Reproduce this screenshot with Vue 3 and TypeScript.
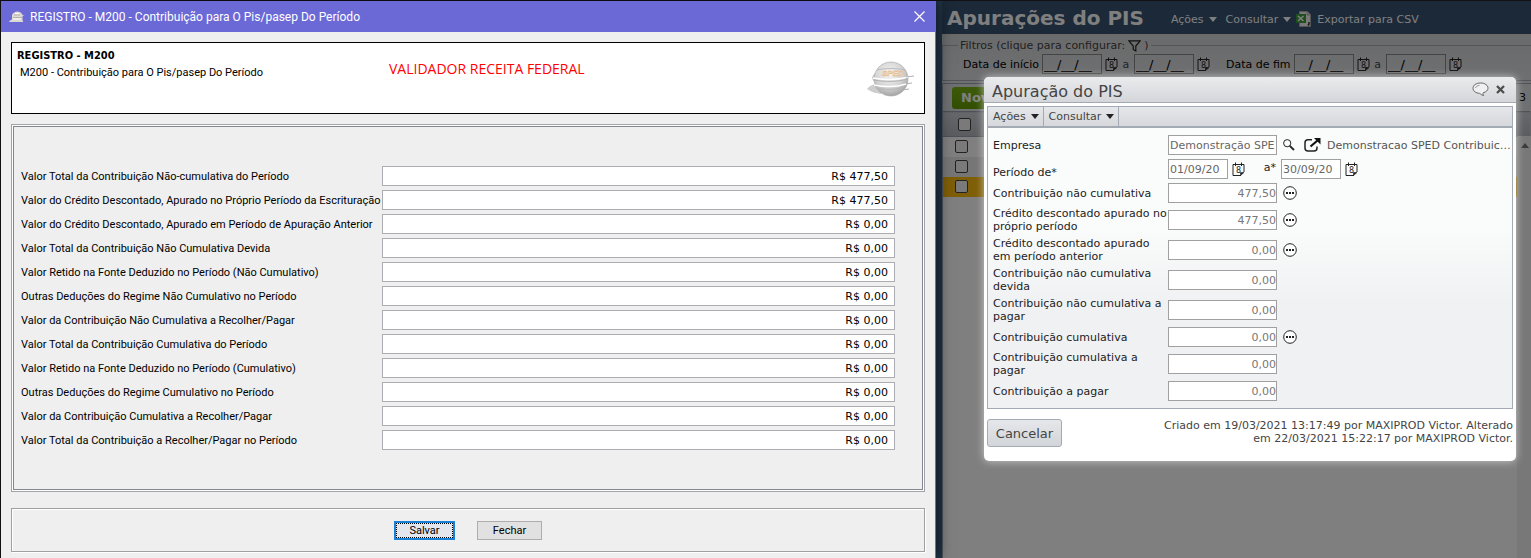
<script setup lang="ts">
import { h, ref } from 'vue'

interface Field {
  id: string
  label: string
  value: string
}
interface DialogField extends Field {
  details: boolean
}

const CalendarIcon = () =>
  h('svg', { width: 13, height: 14, viewBox: '0 0 13 14', 'aria-hidden': 'true' }, [
    h('path', { d: 'M12 10V2.5H1v11h8', fill: 'none', stroke: '#222' }),
    h('path', { d: 'M8.5 13.500V10.500H12z', fill: '#222', stroke: '#222', 'stroke-width': 0.6 }),
    h('path', { d: 'M3.500 .5v3.500M9.500 .5v3.500', stroke: '#222' }),
    h(
      'text',
      { x: 6.5, y: 11, 'text-anchor': 'middle', 'font-size': 8, 'font-family': 'DejaVu Sans, sans-serif', fill: '#222' },
      '8',
    ),
  ])

const validatorFields = ref<Field[]>([
  { id: 'v1', label: 'Valor Total da Contribuição Não-cumulativa do Período', value: 'R$ 477,50' },
  { id: 'v2', label: 'Valor do Crédito Descontado, Apurado no Próprio Período da Escrituração', value: 'R$ 477,50' },
  { id: 'v3', label: 'Valor do Crédito Descontado, Apurado em Período de Apuração Anterior', value: 'R$ 0,00' },
  { id: 'v4', label: 'Valor Total da Contribuição Não Cumulativa Devida', value: 'R$ 0,00' },
  { id: 'v5', label: 'Valor Retido na Fonte Deduzido no Período (Não Cumulativo)', value: 'R$ 0,00' },
  { id: 'v6', label: 'Outras Deduções do Regime Não Cumulativo no Período', value: 'R$ 0,00' },
  { id: 'v7', label: 'Valor da Contribuição Não Cumulativa a Recolher/Pagar', value: 'R$ 0,00' },
  { id: 'v8', label: 'Valor Total da Contribuição Cumulativa do Período', value: 'R$ 0,00' },
  { id: 'v9', label: 'Valor Retido na Fonte Deduzido no Período (Cumulativo)', value: 'R$ 0,00' },
  { id: 'v10', label: 'Outras Deduções do Regime Cumulativo no Período', value: 'R$ 0,00' },
  { id: 'v11', label: 'Valor da Contribuição Cumulativa a Recolher/Pagar', value: 'R$ 0,00' },
  { id: 'v12', label: 'Valor Total da Contribuição a Recolher/Pagar no Período', value: 'R$ 0,00' },
])

const dialogFields = ref<DialogField[]>([
  { id: 'd1', label: 'Contribuição não cumulativa', value: '477,50', details: true },
  { id: 'd2', label: 'Crédito descontado apurado no próprio período', value: '477,50', details: true },
  { id: 'd3', label: 'Crédito descontado apurado em período anterior', value: '0,00', details: true },
  { id: 'd4', label: 'Contribuição não cumulativa devida', value: '0,00', details: false },
  { id: 'd5', label: 'Contribuição não cumulativa a pagar', value: '0,00', details: false },
  { id: 'd6', label: 'Contribuição cumulativa', value: '0,00', details: true },
  { id: 'd7', label: 'Contribuição cumulativa a pagar', value: '0,00', details: false },
  { id: 'd8', label: 'Contribuição a pagar', value: '0,00', details: false },
])

const company = ref('Demonstração SPED Contribuições')
const periodStart = ref('01/09/20')
const periodEnd = ref('30/09/20')

const filters = ref([
  { id: 'f1', label: 'Data de início', from: '__/__/__', to: '__/__/__' },
  { id: 'f2', label: 'Data de fim', from: '__/__/__', to: '__/__/__' },
])

const rows = [
  { id: 1, selected: false },
  { id: 2, selected: false },
  { id: 3, selected: true },
]
</script>

<template>
  <div class="desktop">
    <section class="validator">
      <header class="titlebar">
        <svg class="app-icon" viewBox="0 0 16 12" aria-hidden="true">
          <path d="M0 11c1-2 2-2 3-2.500V4c2-4 8-5 10.500 0l2 .3-2 .7V9l.8 2z" fill="#dcd9d2" />
          <path d="M5 4h6M4 6.500h9" stroke="#b9b2aa" />
          <path d="M6 2.500h4M4 8h8" stroke="#fff" />
        </svg>
        <h1>REGISTRO - M200 - Contribuição para O Pis/pasep Do Período</h1>
        <button class="win-close" type="button" aria-label="Fechar janela">
          <svg viewBox="0 0 11 11"><path d="M.5.5l10 10M10.500.5l-10 10" stroke="#fff" stroke-width="1.200" /></svg>
        </button>
      </header>
      <main class="validator-body">
        <div class="banner">
          <div class="banner-text">
            <strong>REGISTRO - M200</strong>
            <span>M200 - Contribuição para O Pis/pasep Do Período</span>
          </div>
          <p class="stamp">VALIDADOR RECEITA FEDERAL</p>
          <svg class="logo" viewBox="0 0 48 38" aria-hidden="true">
            <radialGradient id="ball" cx="45%" cy="35%" r="65%">
              <stop offset="0" stop-color="#f4f4f4" />
              <stop offset=".6" stop-color="#d6d6d6" />
              <stop offset="1" stop-color="#a4a4a4" />
            </radialGradient>
            <path d="M0 29c4-5 7-4 10-6-3-1-5-3-5-6 2-4 5-5 11-5l-2 22c-4-1-9-1-14-5z" fill="#cdcdcd" />
            <circle cx="24" cy="19" r="17" fill="url(#ball)" stroke="#a5a5a5" stroke-width=".6" />
            <path d="M10 10c8-2 20-2 28 0" fill="none" stroke="#bbb" />
            <path d="M6 18c10 2 25 2 35-1" fill="none" stroke="#fff" stroke-width="1.500" />
            <path d="M7 20c10 2 24 2 33-1M39 17l8-1M37 24l8-1M35 30l7-1" fill="none" stroke="#b0b0b0" />
            <path d="M7 25c10 2 23 2 32-1" fill="none" stroke="#fff" stroke-width="1.500" />
            <path d="M9 28c9 2 19 2 27-1" fill="none" stroke="#b5b5b5" />
            <text x="15" y="16" font-size="8" font-style="italic" font-weight="bold" font-family="Liberation Sans, sans-serif" fill="#f3e2cb" stroke="#e4ab6b" stroke-width=".4">SPED</text>
          </svg>
        </div>
        <form class="values" @submit.prevent>
          <div class="values-inner">
            <div v-for="f in validatorFields" :key="f.id" class="value-row">
              <label :for="f.id">{{ f.label }}</label>
              <input :id="f.id" v-model="f.value" type="text" />
            </div>
          </div>
        </form>
        <footer class="actions">
          <button class="save" type="button"><span>Salvar</span></button>
          <button type="button">Fechar</button>
        </footer>
      </main>
    </section>

    <section class="webapp">
      <header class="app-header">
        <h2>Apurações do PIS</h2>
        <nav>
          <button type="button">Ações<i class="caret"></i></button>
          <button type="button">Consultar<i class="caret"></i></button>
          <button type="button" class="export">
            <svg viewBox="0 0 16 16" aria-hidden="true">
              <path d="M3.500.5h8l3 3v12h-11z" fill="#f4f4f4" stroke="#aaa" />
              <path d="M11 1v3h3" fill="#ccc" stroke="#999" stroke-width=".6" />
              <path d="M0 3h10v9H0z" fill="#3c9a3c" />
              <path d="M2 5l5.500 5M7.500 5L2 10" stroke="#fff" stroke-width="1.600" />
              <path d="M13 11v2l-1 1.500" fill="none" stroke="#222" stroke-width="1.400" />
            </svg>Exportar para CSV
          </button>
        </nav>
      </header>
      <fieldset class="filters">
        <legend>Filtros (clique para configurar:
          <svg viewBox="0 0 13 12" aria-hidden="true"><path d="M.8.8h11.400L7.800 6v5L5.200 9.500V6z" fill="none" stroke="#222" stroke-width="1.200" /></svg>)</legend>
        <div class="filter-row">
          <div v-for="f in filters" :key="f.id" class="filter">
            <label :for="f.id">{{ f.label }}</label>
            <input :id="f.id" v-model="f.from" class="date blank" type="text" />
            <CalendarIcon class="cal" />
            <label class="sep" :for="f.id + 'b'">a</label>
            <input :id="f.id + 'b'" v-model="f.to" class="date blank" type="text" />
            <CalendarIcon class="cal" />
          </div>
        </div>
      </fieldset>
      <div class="grid">
        <div class="grid-bar">
          <button class="new" type="button">Novo</button>
          <span>3</span>
        </div>
        <table>
          <thead>
            <tr><th class="pick"><input type="checkbox" aria-label="Selecionar todos" /></th><th></th></tr>
          </thead>
          <tbody>
            <tr v-for="r in rows" :key="r.id" :class="{ selected: r.selected }">
              <td class="pick"><input type="checkbox" :aria-label="'Selecionar linha ' + r.id" /></td><td></td>
            </tr>
          </tbody>
        </table>
        <div class="track"><i></i></div>
      </div>
      <div class="backdrop"></div>

      <div class="dialog" role="dialog" aria-labelledby="dlg-title">
        <header class="dialog-head">
          <h3 id="dlg-title">Apuração do PIS</h3>
          <button type="button" aria-label="Comentários">
            <svg width="17" height="15" viewBox="0 0 17 15"><path d="M8.500 1C4 1 1 3.300 1 6.200s3 5.100 6.500 5.100c1.500.8 1.500 1.700 4.200 2.200-.9-1-.9-1.700-.5-2.700C14 10 16 8.300 16 6.200 16 3.300 13 1 8.500 1z" fill="#f0f0f2" stroke="#666" /><path d="M3.500 6c.3-1.500 2-2.500 4-2.700" fill="none" stroke="#999" /></svg>
          </button>
          <button type="button" aria-label="Fechar">
            <svg width="9" height="9" viewBox="0 0 9 9"><path d="M1 1l7 7M8 1L1 8" stroke="#4d4d4d" stroke-width="2.300" /></svg>
          </button>
        </header>
        <div class="dialog-panel">
          <nav class="menu">
            <button type="button">Ações<i class="caret"></i></button>
            <button type="button">Consultar<i class="caret"></i></button>
          </nav>
          <form class="dialog-form" @submit.prevent>
            <div class="row">
              <label for="emp">Empresa</label>
              <div class="control">
                <input id="emp" v-model="company" class="wide" type="text" />
                <button type="button" aria-label="Pesquisar">
                  <svg width="12" height="12" viewBox="0 0 12 12"><circle cx="4.200" cy="4.200" r="3.600" fill="none" stroke="#222" /><path d="M6.800 6.800L11 11" stroke="#222" stroke-width="1.800" /></svg>
                </button>
                <button class="open" type="button" aria-label="Abrir">
                  <svg width="17" height="14" viewBox="0 0 17 14"><path d="M8 1.800H4Q1 1.800 1 4.800V10q0 3 3 3h6q3 0 3-3V8.500" fill="none" stroke="#222" stroke-width="1.500" /><path d="M6.500 8.500l7-6" stroke="#111" stroke-width="2.200" /><path d="M10 0h6.500v6.500z" fill="#111" /></svg>
                </button>
                <span class="company">Demonstracao SPED Contribuicoes</span>
              </div>
            </div>
            <div class="row">
              <label class="low" for="ini">Período de*</label>
              <div class="control">
                <input id="ini" v-model="periodStart" class="date" type="text" />
                <CalendarIcon class="cal" />
                <label class="until" for="end">a*</label>
                <input id="end" v-model="periodEnd" class="date" type="text" />
                <CalendarIcon class="cal" />
              </div>
            </div>
            <div v-for="f in dialogFields" :key="f.id" class="row">
              <label :for="f.id">{{ f.label }}</label>
              <div class="control">
                <input :id="f.id" v-model="f.value" class="wide amount" type="text" />
                <button v-if="f.details" type="button" :aria-label="'Detalhes: ' + f.label">
                  <svg width="14" height="14" viewBox="0 0 14 14"><circle cx="7" cy="7" r="6.300" fill="#fff" stroke="#222" /><path d="M3 6h2v2H3zM6 6h2v2H6zM9 6h2v2H9z" fill="#222" /></svg>
                </button>
              </div>
            </div>
          </form>
        </div>
        <footer class="dialog-foot">
          <button type="button">Cancelar</button>
          <p>Criado em 19/03/2021 13:17:49 por MAXIPROD Victor. Alterado em 22/03/2021 15:22:17 por MAXIPROD Victor.</p>
        </footer>
      </div>
    </section>
  </div>
</template>

<style>
body { margin: 0; background: #203448; }
</style>

<style scoped>
* { box-sizing: border-box; }
h1, h2, h3, p { margin: 0; font-weight: normal; }
button { font: inherit; color: inherit; padding: 0; margin: 0; border: 0; background: none; }
input { font: inherit; margin: 0; border-radius: 0; outline: 0; }
svg { display: block; flex: none; }
.desktop {
  display: grid;
  grid-template-columns: minmax(0, 936fr) minmax(0, 589fr);
  column-gap: 6px;
  min-height: 100vh;
  background: #203448;
  border-top: 1px solid #111116;
}

/* Validator window */
.validator {
  position: relative;
  z-index: 1;
  display: flex;
  flex-direction: column;
  background: #efefef;
  border-left: 1px solid #111;
  border-right: 1px solid #6b69d6;
  box-shadow: 2px 0 14px rgba(0, 0, 0, .55);
  font: 11px/13px Roboto, Arial, sans-serif;
  color: #000;
}
.titlebar {
  display: flex;
  align-items: center;
  height: 31px;
  padding: 0 10px 0 8px;
  background: #6b69d6;
  color: #fff;
}
.app-icon { width: 16px; height: 12px; }
.titlebar h1 { margin-left: 5px; font: 12px/18px Roboto, "Segoe UI", sans-serif; }
.win-close { margin-left: auto; }
.win-close svg { width: 11px; height: 11px; }
.validator-body { padding: 10px 10px 6px; }
.banner {
  display: flex;
  height: 72px;
  background: #fff;
  border: 1px solid #000;
}
.banner-text { width: 377px; padding: 6px 0 0 5px; }
.banner-text strong, .banner-text span { display: block; }
.banner-text strong { font: bold 11px/13px "DejaVu Sans Condensed", Tahoma, sans-serif; }
.banner-text span { margin: 4px 0 0 3px; }
.stamp { padding-top: 17px; color: #f00; font: 14px/18px "Open Sans", "Segoe UI", sans-serif; }
.logo { width: 48px; height: 38px; margin: 17px 9px 0 auto; }
.values {
  margin-top: 10px;
  border: 1px solid #a0a3a8;
  background: #fff;
  padding: 1px;
}
.values-inner {
  display: grid;
  row-gap: 4px;
  padding: 39px 27px 39px 7px;
  background: #efefef;
  border: 1px solid #82878f;
}
.value-row { display: grid; grid-template-columns: 361px minmax(0, 1fr); align-items: center; }
.value-row label { white-space: nowrap; }
.value-row input {
  width: 100%;
  height: 20px;
  padding: 0 6px;
  border: 1px solid #abadb3;
  background: #fff;
  font: 11px/18px "DejaVu Sans", Tahoma, sans-serif;
  text-align: right;
  color: #000;
}
.actions {
  display: flex;
  justify-content: center;
  align-items: center;
  gap: 22px;
  height: 44px;
  margin-top: 16px;
  border: 1px solid #a0a0a0;
  box-shadow: inset 1px 1px #fff, 1px 1px #fff;
}
.actions button {
  width: 65px;
  height: 19px;
  background: #e1e1e1;
  border: 1px solid #adadad;
}
.actions .save { width: 61px; border: 2px solid #1a80d8; background: #e3e6ec; padding: 0; }
.save span { display: block; height: 15px; border: 1px dotted #000; line-height: 13px; }

/* Web application */
.webapp {
  position: relative;
  display: flex;
  flex-direction: column;
  background: #fff;
  font: 11px/13px "DejaVu Sans", Verdana, sans-serif;
  color: #000;
}
.app-header {
  display: flex;
  align-items: center;
  height: 33px;
  padding-left: 5px;
  background: #365270;
  color: #fff;
  white-space: nowrap;
}
.app-header h2 { font: bold 20px/26px "DejaVu Sans", Verdana, sans-serif; }
.app-header nav { display: flex; margin-left: 27px; padding-top: 3px; gap: 9px; }
.app-header button, .menu button { display: flex; align-items: center; gap: 5px; }
.app-header .export { margin-left: -4px; }
.export svg { width: 16px; height: 16px; }
.caret { border: 4px solid transparent; border-top: 5px solid currentColor; border-bottom: 0; }
.filters {
  min-width: 0;
  margin: 5px 0 0;
  padding: 0 0 6px 20px;
  border: 1px solid #a4adb6;
  border-right: 0;
}
.webapp::before {
  content: "";
  position: absolute;
  inset: 33px 0 auto;
  height: 49px;
  background: linear-gradient(#d4d5d7, #dfe0e2);
}
.filters, .grid { position: relative; }
.filters legend { display: flex; align-items: center; gap: 3px; height: 13px; margin-left: -5px; padding: 0 2px; white-space: nowrap; color: #444; }
.filters legend svg { width: 13px; height: 12px; }
.filter-row { display: flex; gap: 16px; padding-top: 2px; }
.filter { display: flex; align-items: center; gap: 3px; white-space: nowrap; }
.sep { width: 10px; text-align: center; color: #444; }
.date { width: 60px; height: 20px; padding: 0 1px; border: 1px solid #a0a0a0; background: #fff; color: #666; }
.blank { background: transparent; color: #000; font-size: 13px; border-color: #888; }
.grid { flex: 1; border-left: 1px solid #9aa3ad; border-top: 1px solid #9aa3ad; margin-top: 2px; }
.grid-bar {
  display: flex;
  align-items: center;
  justify-content: space-between;
  height: 27px;
  padding: 0 5px 0 9px;
  background: #dfe0e3;
}
.new { width: 62px; height: 22px; padding-left: 9px; text-align: left; border-radius: 3px; background: linear-gradient(#7cb516, #659e04); color: #fff; font-weight: bold; font-size: 13px; }
table { width: 100%; border-collapse: collapse; table-layout: fixed; }
th, td { padding: 0; height: 20px; }
th { height: 25px; background: linear-gradient(#cdd0d5, #b4b8be); border-top: 1px solid #9aa3ad; border-bottom: 1px solid #9aa3ad; border-right: 1px solid #c8ccd2; }
.pick { width: 38px; text-align: left; padding-left: 12px; }
th.pick { padding-left: 15px; }
.pick input { display: block; appearance: none; width: 13px; height: 13px; border: 1px solid #444; border-radius: 2px; background: #f4f4f4; }
tbody tr:nth-child(2) { background: #ececec; }
tbody tr.selected { background: #ffbd10; }
.track { position: absolute; right: 0; top: 52px; bottom: 0; width: 14px; padding: 7px 0 0 4px; background: #f1f1f1; }
.track i { display: block; width: 8px; border: 4px solid transparent; border-bottom: 5px solid #777; border-top: 0; }
.backdrop { position: absolute; inset: 0; background: rgba(0, 0, 0, .5); }

/* Dialog */
.dialog {
  position: absolute;
  top: 76px;
  left: 42px;
  right: 15px;
  padding: 0 3px 14px;
  border-radius: 5px;
  background: #fff;
  box-shadow: 0 0 8px rgba(255, 255, 255, .6);
}
.dialog-head {
  display: flex;
  align-items: center;
  gap: 7px;
  height: 26px;
  margin: 0 -3px 3px;
  padding: 0 11px 0 8px;
  border-bottom: 1px solid #a3aab4;
  border-radius: 5px 5px 0 0;
  background: linear-gradient(#eaebed, #d4d6da);
  color: #444;
}
.dialog-head h3 { margin-right: auto; padding-top: 5px; font-size: 16px; line-height: 20px; }
.dialog-panel { border: 1px solid #a3aab4; background: linear-gradient(#fafcfb 40%, #f0f1f3 65%); }
.menu { display: flex; height: 21px; border-bottom: 2px solid #a3aab4; background: linear-gradient(#e6e7ea, #d6d8dc); color: #444; }
.menu button { padding: 0 4px 0 5px; border-right: 1px solid #a3aab4; }
.menu .caret { color: #222; }
.dialog-form { padding: 5px 0 5px 5px; }
.row { display: flex; align-items: center; min-height: 24px; padding: 2px 0; color: #222; }
.row > label { flex: none; width: 175px; }
.row > .low { padding-top: 8px; line-height: 12px; }
.control { display: flex; flex: 1; align-items: center; min-width: 0; }
.wide { width: 109px; height: 20px; padding: 0 1px; border: 1px solid #a0a0a0; background: #fff; color: #666; }
.amount { padding: 0; text-align: right; color: #777; }
.control button { margin-left: 6px; }
.control .open { margin-left: 9px; }
.company { flex: 1; min-width: 0; margin-left: 6px; overflow: hidden; text-overflow: ellipsis; white-space: nowrap; color: #555; }
.control .cal { margin-left: 4px; }
.until { width: 36px; padding: 0 5px 4px 0; text-align: right; }
.dialog-foot { display: flex; justify-content: space-between; padding-top: 10px; }
.dialog-foot button {
  width: 75px;
  height: 28px;
  border: 1px solid #a3aab4;
  border-radius: 3px;
  background: linear-gradient(#e6e7ea, #d2d5d9);
  color: #444;
  font-size: 13px;
}
.dialog-foot p { width: 352px; text-align: right; color: #444; }
</style>
